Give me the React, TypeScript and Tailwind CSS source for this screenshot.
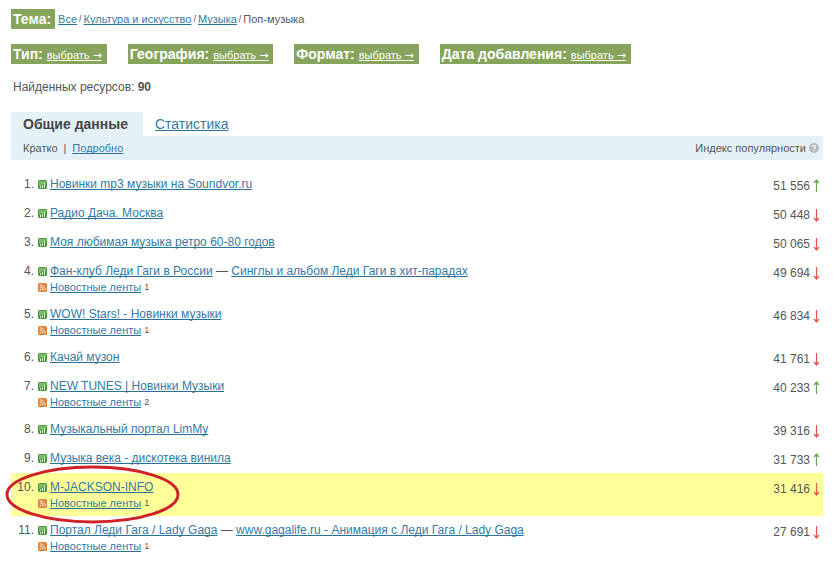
type Row = {
  title: string;
  extra?: string;
  feeds?: number;
  score: string;
  up?: boolean;
  marked?: boolean;
};

const rows: Row[] = [
  { title: 'Новинки mp3 музыки на Soundvor.ru', score: '51 556', up: true },
  { title: 'Радио Дача. Москва', score: '50 448' },
  { title: 'Моя любимая музыка ретро 60-80 годов', score: '50 065' },
  { title: 'Фан-клуб Леди Гаги в России', extra: 'Синглы и альбом Леди Гаги в хит-парадах', feeds: 1, score: '49 694' },
  { title: 'WOW! Stars! - Новинки музыки', feeds: 1, score: '46 834' },
  { title: 'Качай музон', score: '41 761' },
  { title: 'NEW TUNES | Новинки Музыки', feeds: 2, score: '40 233', up: true },
  { title: 'Музыкальный портал LimMy', score: '39 316' },
  { title: 'Музыка века - дискотека винила', score: '31 733', up: true },
  { title: 'M-JACKSON-INFO', feeds: 1, score: '31 416', marked: true },
  { title: 'Портал Леди Гага / Lady Gaga', extra: 'www.gagalife.ru - Анимация с Леди Гага / Lady Gaga', feeds: 1, score: '27 691' },
];

const filters = ['Тип:', 'География:', 'Формат:', 'Дата добавления:'];
const link = 'text-[#347aa6] underline decoration-[#2b7195] underline-offset-1 [text-decoration-skip-ink:none]';

function ChartIcon() {
  return (
    <svg className="h-[9px] w-[9px] shrink-0" viewBox="0 0 9 9" aria-hidden="true">
      <rect width="9" height="9" rx="1.5" fill="#4c983d" />
      <path d="M1 1h7v2L1 6z" fill="#7dba6c" />
      <path d="M2 6h1v2H2zM4 5h1v3H4zM6 3h1v5H6z" fill="#e6f5df" />
    </svg>
  );
}

function FeedIcon() {
  return (
    <svg className="h-[9px] w-[9px] shrink-0" viewBox="0 0 9 9" aria-hidden="true">
      <rect width="9" height="9" rx="1.5" fill="#df8238" />
      <circle cx="2.4" cy="6.6" r="0.9" fill="#fff3e6" />
      <path d="M1.7 3.8a3.5 3.5 0 0 1 3.5 3.5M1.7 1.8a5.5 5.5 0 0 1 5.5 5.5" fill="none" stroke="#fff3e6" strokeWidth="1" />
    </svg>
  );
}

function Trend({ up }: { up?: boolean }) {
  return (
    <svg
      className={`h-[14px] w-[7px] ${up ? 'text-[#6da553]' : 'text-[#e0564a]'}`}
      viewBox="0 0 7 14"
      fill="none"
      stroke="currentColor"
      strokeWidth="1.2"
      role="img"
      aria-label={up ? 'Рост' : 'Падение'}
    >
      <path d={up ? 'M3.5 13V1M1 4L3.5 1L6 4' : 'M3.5 1V13M1 10L3.5 13L6 10'} />
    </svg>
  );
}

export default function App() {
  return (
    <main className="bg-white pt-[9px] pr-[11px] pb-2 pl-[11px] font-['Liberation_Sans',Arial,sans-serif] text-xs text-[#555]">
      <nav className="flex items-center gap-[3px] text-[11px]">
        <strong className="h-5 bg-[#86a45b] pr-1 pl-[2px] text-sm leading-5 text-white">Тема:</strong>
        <div className="flex gap-[2px] leading-4">
          <a href="#all" className={link}>Все</a>
          <span className="text-[9px] leading-4">/</span>
          <a href="#culture" className={link}>Культура и искусство</a>
          <span className="text-[9px] leading-4">/</span>
          <a href="#music" className={link}>Музыка</a>
          <span className="text-[9px] leading-4">/</span>
          <span>Поп-музыка</span>
        </div>
      </nav>

      <div className="mt-[15px] flex flex-wrap gap-x-[21px] gap-y-2">
        {filters.map((name) => (
          <div key={name} className="flex h-5 items-baseline gap-1 bg-[#86a45b] pr-[5px] pl-[2px] text-white">
            <strong className="text-sm leading-5">{name}</strong>
            <button type="button" className="text-[11px] leading-5 underline underline-offset-1 [text-decoration-skip-ink:none]">
              выбрать <span className="font-['DejaVu_Sans']">→</span>
            </button>
          </div>
        ))}
      </div>

      <p className="mt-[15px] pl-[2px] leading-4">
        Найденных ресурсов: <b>90</b>
      </p>

      <div className="mt-[17px] flex text-sm leading-6">
        <strong className="bg-[#e4f1f9] pr-[15px] pl-3 text-[#444]">Общие данные</strong>
        <a href="#stats" className={`px-3 ${link}`}>Статистика</a>
      </div>
      <div className="flex h-6 items-center bg-[#e4f1f9] pr-1 pl-3 text-[11px]">
        <span>Кратко</span>
        <span className="px-[6px]">|</span>
        <a href="#detail" className={link}>Подробно</a>
        <span className="ml-auto">Индекс популярности</span>
        <button type="button" aria-label="Справка" className="ml-[3px]">
          <svg className="h-[10px] w-[10px]" viewBox="0 0 10 10">
            <circle cx="5" cy="5" r="5" fill="#b5b9bb" />
            <path d="M3.3 3.8Q3.4 2.3 5 2.3T6.7 3.8Q6.7 4.6 5.7 5.1 5 5.4 5 6.2M5 7v1.2" fill="none" stroke="#fff" strokeWidth="1.2" />
          </svg>
        </button>
      </div>

      <ol className="mt-[10px]">
        {rows.map((row, i) => (
          <li key={row.title} className={`relative flex items-start pt-[6px] pr-[3px] pb-[6px] ${row.marked ? 'bg-[#ffff9a]' : ''}`}>
            <span className="w-[23px] text-right leading-[17px]">{i + 1}.</span>
            <div className="ml-1 min-w-0 flex-1">
              <div className="flex items-center gap-[3px] leading-[17px]">
                <ChartIcon />
                <div>
                  <a href={`#site-${i + 1}`} className={link}>{row.title}</a>
                  {row.extra && (
                    <>
                      {' — '}
                      <a href={`#page-${i + 1}`} className={link}>{row.extra}</a>
                    </>
                  )}
                </div>
              </div>
              {row.feeds && (
                <div className="flex items-center gap-[3px] text-[11px] leading-[14px]">
                  <FeedIcon />
                  <a href={`#feeds-${i + 1}`} className={link}>Новостные ленты</a>
                  <span className="text-[9px]">{row.feeds}</span>
                </div>
              )}
            </div>
            <div className="flex items-center gap-[3px] pt-[3px] leading-[14px]">
              {row.score}
              <Trend up={row.up} />
            </div>
            {row.marked && (
              <svg className="pointer-events-none absolute -top-2 -left-[6px] h-[59px] w-[175px]" viewBox="0 0 175 59" aria-hidden="true">
                <ellipse cx="87.5" cy="29.5" rx="85.5" ry="27.5" fill="none" stroke="#cf2228" strokeWidth="3" />
              </svg>
            )}
          </li>
        ))}
      </ol>
    </main>
  );
}
